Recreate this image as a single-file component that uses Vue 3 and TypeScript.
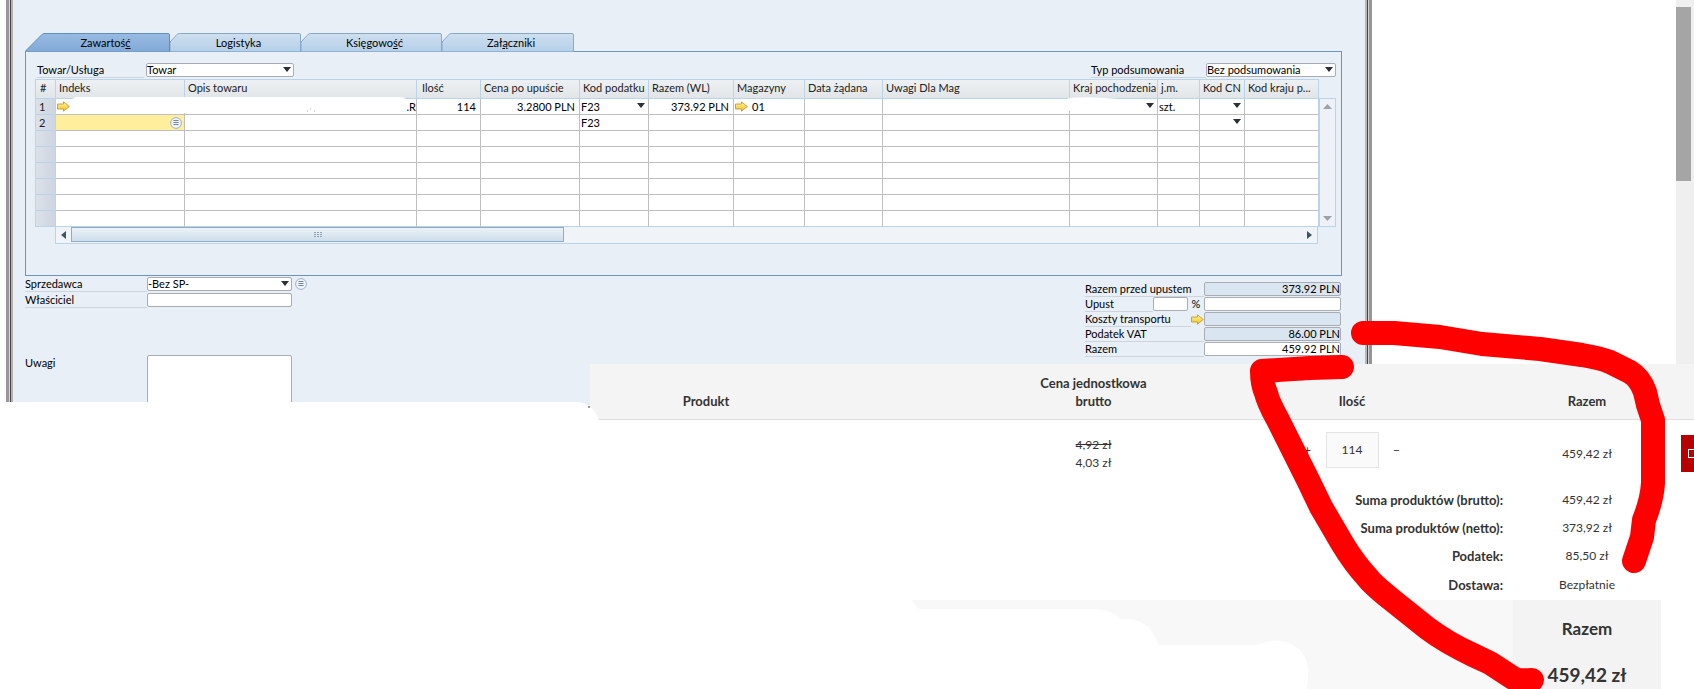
<script setup lang="ts">
import { ref } from 'vue'

interface Tab { before: string; key: string; after: string; width: number }
interface Column { label: string; width?: number; pad?: number }
interface Line {
  item?: 'link' | 'active'
  description?: string
  quantity?: string
  price?: string
  tax?: string
  taxMenu?: boolean
  total?: string
  store?: string
  countryMenu?: boolean
  unit?: string
  cnMenu?: boolean
}

const tabs: Tab[] = [
  { before: 'Zawartoś', key: 'ć', after: '', width: 145 },
  { before: 'Lo', key: 'g', after: 'istyka', width: 131 },
  { before: 'Księgowo', key: 'ś', after: 'ć', width: 141 },
  { before: 'Zał', key: 'ą', after: 'czniki', width: 132 },
]
const activeTab = ref(0)

const tabShape = (i: number, w: number): string =>
  i === 0
    ? `M0 18.500L17 1.500Q18 .5 20 .5H${w - 2}Q${w - 0.5} .5 ${w - 0.5} 2V18.500`
    : `M0 18.500V9L7 1.500Q8 .5 10 .5H${w - 2}Q${w - 0.5} .5 ${w - 0.5} 2V18.500`

const columns: Column[] = [
  { label: '#', width: 20 },
  { label: 'Indeks', width: 129 },
  { label: 'Opis towaru', width: 232 },
  { label: 'Ilość', width: 64, pad: 1 },
  { label: 'Cena po upuście', width: 99 },
  { label: 'Kod podatku', width: 69 },
  { label: 'Razem (WL)', width: 85 },
  { label: 'Magazyny', width: 71 },
  { label: 'Data żądana', width: 78 },
  { label: 'Uwagi Dla Mag' },
  { label: 'Kraj pochodzenia', width: 88 },
  { label: 'j.m.', width: 42 },
  { label: 'Kod CN', width: 45 },
  { label: 'Kod kraju p...', width: 74 },
]

const lines: Line[] = [
  {
    item: 'link', description: '.R', quantity: '114', price: '3.2800 PLN', tax: 'F23', taxMenu: true,
    total: '373.92 PLN', store: '01', countryMenu: true, unit: 'szt.', cnMenu: true,
  },
  { item: 'active', tax: 'F23', cnMenu: true },
  {}, {}, {}, {}, {}, {},
]

const sums = [
  { label: 'Suma produktów (brutto):', value: '459,42 zł' },
  { label: 'Suma produktów (netto):', value: '373,92 zł' },
  { label: 'Podatek:', value: '85,50 zł' },
  { label: 'Dostawa:', value: 'Bezpłatnie' },
]
const amount = ref('114')
</script>

<template>
  <main class="page">
    <svg class="defs" aria-hidden="true">
      <defs>
        <linearGradient id="gold" x1="0" y1="0" x2="0" y2="1">
          <stop offset="0" stop-color="#fff6a8" />
          <stop offset="1" stop-color="#f3bf1c" />
        </linearGradient>
        <symbol id="arrow" viewBox="0 0 13 11">
          <path d="M.5 3H6.500V.8L12.300 5.500L6.500 10.200V8H.5Z" fill="url(#gold)" stroke="#c79a28" stroke-width=".9" />
        </symbol>
        <symbol id="list" viewBox="0 0 12 12">
          <circle cx="6" cy="6" r="5.400" fill="#eef3fa" stroke="#9fb0cf" />
          <path d="M3.500 3.500H8.500M3.500 5.500H8.500M3.500 7.500H8.500" stroke="#76849c" />
        </symbol>
        <linearGradient id="tab-on" x1="0" y1="0" x2="0" y2="1">
          <stop offset="0" stop-color="#98bbe2" />
          <stop offset="1" stop-color="#82a9d7" />
        </linearGradient>
        <linearGradient id="tab-off" x1="0" y1="0" x2="0" y2="1">
          <stop offset="0" stop-color="#cfdff0" />
          <stop offset="1" stop-color="#b5d0e8" />
        </linearGradient>
      </defs>
    </svg>

    <section class="erp">
      <div class="frame-left"></div>
      <div class="body">
        <div class="tabs" role="tablist">
          <button
            v-for="(tab, i) in tabs" :key="tab.before" type="button" role="tab" class="tab"
            :aria-selected="i === activeTab" :style="{ width: tab.width + 'px' }" @click="activeTab = i"
          >
            <svg class="tab-shape" :width="tab.width" height="19" aria-hidden="true">
              <path
                :d="tabShape(i, tab.width)" :fill="i === activeTab ? 'url(#tab-on)' : 'url(#tab-off)'"
                :stroke="i === activeTab ? '#5f8fc0' : '#86a9cb'"
              />
            </svg>
            <span class="tab-text">{{ tab.before }}<u>{{ tab.key }}</u>{{ tab.after }}</span>
          </button>
        </div>

        <div class="panel">
          <div class="toolbar">
            <label class="label kind" for="kind">Towar/Usługa</label>
            <span class="pick kind-pick"><select id="kind"><option>Towar</option></select></span>
            <span class="grow"></span>
            <label class="label summary" for="summary">Typ podsumowania</label>
            <span class="pick summary-pick"><select id="summary"><option>Bez podsumowania</option></select></span>
          </div>

          <div class="grid-row">
            <table class="lines">
              <colgroup>
                <col v-for="c in columns" :key="c.label" :style="c.width ? { width: c.width + 'px' } : {}">
              </colgroup>
              <thead>
                <tr><th v-for="c in columns" :key="c.label" :class="{ inset: c.pad }">{{ c.label }}</th></tr>
              </thead>
              <tbody>
                <tr v-for="(line, i) in lines" :key="i">
                  <th scope="row">{{ i < 2 ? i + 1 : '' }}</th>
                  <td :class="{ active: line.item === 'active' }">
                    <svg v-if="line.item === 'link'" class="arrow"><use href="#arrow" /></svg>
                    <svg v-if="line.item === 'active'" class="list end"><use href="#list" /></svg>
                  </td>
                  <td class="num tight">{{ line.description }}</td>
                  <td class="num">{{ line.quantity }}</td>
                  <td class="num">{{ line.price }}</td>
                  <td>
                    <span v-if="line.taxMenu" class="pick flat"><select aria-label="Kod podatku"><option>{{ line.tax }}</option></select></span>
                    <template v-else>{{ line.tax }}</template>
                  </td>
                  <td class="num">{{ line.total }}</td>
                  <td><span v-if="line.store" class="store"><svg class="arrow"><use href="#arrow" /></svg>{{ line.store }}</span></td>
                  <td></td>
                  <td></td>
                  <td><span v-if="line.countryMenu" class="pick flat"><select aria-label="Kraj pochodzenia"><option></option></select></span></td>
                  <td>{{ line.unit }}</td>
                  <td><span v-if="line.cnMenu" class="pick flat"><select aria-label="Kod CN"><option></option></select></span></td>
                  <td></td>
                </tr>
              </tbody>
            </table>
            <div class="vscroll">
              <button type="button" aria-label="W górę"><svg width="9" height="5"><path d="M4.500 0L9 5H0Z" fill="#9aa3ab" /></svg></button>
              <button type="button" aria-label="W dół"><svg width="9" height="5"><path d="M0 0H9L4.500 5Z" fill="#9aa3ab" /></svg></button>
            </div>
          </div>
          <div class="hscroll">
            <button type="button" aria-label="W lewo"><svg width="5" height="8"><path d="M5 0V8L0 4Z" fill="#3f5563" /></svg></button>
            <div class="hthumb"><svg width="8" height="5"><path d="M0 .5H8M0 2.500H8M0 4.500H8" stroke="#8fa1b3" stroke-dasharray="2 1" /></svg></div>
            <span class="grow"></span>
            <button type="button" aria-label="W prawo"><svg width="5" height="8"><path d="M0 0V8L5 4Z" fill="#3f5563" /></svg></button>
          </div>
        </div>

        <div class="footer">
          <div class="people">
            <label class="label" for="seller">Sprzedawca</label>
            <span class="pick"><select id="seller"><option>-Bez SP-</option></select></span>
            <svg class="list"><use href="#list" /></svg>
            <label class="label" for="owner">Właściciel</label>
            <input id="owner" class="field" type="text">
            <label class="notes-label" for="notes">Uwagi</label>
            <textarea id="notes" class="notes"></textarea>
          </div>
          <div class="totals">
            <label class="label" for="t1">Razem przed upustem</label>
            <input id="t1" class="field shaded" type="text" value="373.92 PLN" readonly>
            <div class="discount">
              <label class="label grow" for="t2">Upust</label>
              <input id="t2" class="field percent" type="text"><span>%</span>
            </div>
            <input class="field" type="text" aria-label="Kwota upustu">
            <div class="discount">
              <label class="label grow" for="t3">Koszty transportu</label>
              <svg class="arrow"><use href="#arrow" /></svg>
            </div>
            <input id="t3" class="field shaded" type="text" readonly>
            <label class="label" for="t4">Podatek VAT</label>
            <input id="t4" class="field shaded" type="text" value="86.00 PLN" readonly>
            <label class="label" for="t5">Razem</label>
            <input id="t5" class="field" type="text" value="459.92 PLN">
          </div>
        </div>
      </div>
      <div class="frame-right"></div>
    </section>

    <div class="track"><div class="thumb"></div></div>

    <svg class="wipe" viewBox="0 0 1694 689" preserveAspectRatio="none" aria-hidden="true">
      <path
        fill="#fff"
        d="M76 97H400Q407 97 407 103V113H71V102Q72 98 76 97ZM1068 98Q1092 96 1118 99V111H1068ZM0 402H576Q586 402 591 408Q597 413 599 421H0Z"
      />
      <circle cx="589" cy="407" r="1" fill="#777" />
      <path d="M307 111H308M310 109H311M314 111H315" stroke="#aaa" />
    </svg>

    <section class="shop">
      <table class="cart">
        <colgroup><col><col class="c-unit"><col class="c-qty"><col class="c-sum"><col class="c-del"></colgroup>
        <thead>
          <tr>
            <th class="product">Produkt</th>
            <th>Cena jednostkowa<br>brutto</th>
            <th>Ilość</th>
            <th>Razem</th>
            <th></th>
          </tr>
        </thead>
        <tbody>
          <tr class="item">
            <td></td>
            <td class="prices"><s>4,92 zł</s><br>4,03 zł</td>
            <td>
              <div class="stepper">
                <button type="button" aria-label="Więcej">+</button>
                <input v-model="amount" type="text" aria-label="Ilość">
                <button type="button" aria-label="Mniej">−</button>
              </div>
            </td>
            <td class="line-sum">459,42 zł</td>
            <td class="del"><button type="button" class="remove" aria-label="Usuń"><svg width="12" height="9"><rect x=".5" y=".5" width="11" height="8" fill="none" stroke="#fff" /></svg></button></td>
          </tr>
          <tr v-for="s in sums" :key="s.label" class="sum">
            <th colspan="3">{{ s.label }}</th>
            <td>{{ s.value }}</td>
            <td></td>
          </tr>
          <tr class="grand">
            <td colspan="3" class="pale"></td>
            <td class="grand-cell"><strong>Razem</strong><b>459,42 zł</b></td>
            <td></td>
          </tr>
        </tbody>
      </table>
    </section>

    <svg class="marks" viewBox="0 0 1694 689" preserveAspectRatio="none" aria-hidden="true">
      <path
        fill="#fff"
        d="M589 599H911L918 609H1095Q1110 609 1120 619Q1150 617 1158 645H1258Q1270 639 1283 641Q1308 648 1308 672Q1309 682 1306 690H589Z"
      />
      <g fill="none" stroke="#fe0000" stroke-width="24" stroke-linecap="round" stroke-linejoin="round">
        <path d="M1363 333L1394 333L1440 337L1482 344L1540 349L1582 355Q1600 358 1610 362L1630 372Q1640 378 1645 392L1648 405L1653 420V483Q1652 500 1644 520L1642 537L1634 561" />
        <path d="M1342 367L1310 368L1262 371Q1262 384 1266 393Q1268 402 1278 420L1291 446L1308 480L1321 507L1342 543Q1354 563 1367 577Q1372 584 1392 600L1427 628Q1447 643 1473 655L1490 663L1513 678Q1518 681 1532 680" />
      </g>
    </svg>
  </main>
</template>

<style>
body { margin: 0; background: #fff; }
</style>

<style scoped>
.page {
  position: relative;
  display: grid;
  grid-template-columns: 6px minmax(0, 1366fr) minmax(0, 304fr) 18px;
  grid-template-rows: 364px 44px auto;
  min-height: 100vh;
  overflow: hidden;
  background: #fff;
}
.page * { box-sizing: border-box; }
.defs { position: absolute; width: 0; height: 0; }

.erp {
  grid-column: 2;
  grid-row: 1 / 3;
  display: grid;
  grid-template-columns: 7px minmax(0, 1fr) 7px;
  background: #e9eff6;
  color: #000;
  font: 11px/14px Lato, "Noto Sans", sans-serif;
  overflow: hidden;
}
.frame-left { background: linear-gradient(90deg, #96969c 0 3px, #d8d8d8 3px 4px, #4a4646 4px 5px, #b8b0ac 5px 7px); }
.frame-right { background: linear-gradient(90deg, #b6b8b8 0 2px, #454545 2px 3px, #d2d2d2 3px 4px, #969696 4px 7px); }
.body { padding: 33px 23px 0 12px; min-width: 0; }

.tabs { display: flex; height: 18px; }
.tab { position: relative; flex: none; height: 19px; padding: 0; border: 0; background: none; font: inherit; color: #000; }
.tab-shape { position: absolute; left: 0; top: 0; }
.tab-text { position: relative; padding-left: 6px; line-height: 20px; }
.tab:first-child .tab-text { padding-left: 16px; }

.panel { height: 225px; padding: 11px 5px 0 9px; border: 1px solid #6a94c2; }
.toolbar { display: flex; height: 16px; padding-left: 2px; }
.grow { flex: 1; }
.label { height: 15px; border-bottom: 1px solid #cdd4dc; white-space: nowrap; }
.kind { width: 107px; margin-right: 2px; }
.summary { width: 115px; }
.kind-pick { width: 148px; }
.summary-pick { width: 130px; }

.pick { position: relative; display: block; height: 14px; background: #fff; border: 1px solid #a9adb3; border-radius: 2px; }
.pick::after { content: ""; position: absolute; right: 2px; top: 3px; border: 4px solid transparent; border-top: 5px solid #2b2f36; border-bottom: 0; }
.pick select { display: block; width: 100%; height: 12px; padding: 0; border: 0; outline: 0; background: none; appearance: none; font: inherit; line-height: 12px; color: #000; }
.pick.flat { border: 0; height: 15px; background: none; }
.pick.flat select { height: 15px; line-height: 15px; }
.pick.flat::after { right: 1px; top: 4px; }

.grid-row { display: flex; }
.lines { flex: 1 1 0; width: 100%; min-width: 0; table-layout: fixed; border-collapse: separate; border-spacing: 0; border-top: 1px solid #b9d3ea; border-left: 1px solid #b9d3ea; }
.lines th { height: 19px; padding: 0 0 2px 3px; text-align: left; font-weight: 400; color: #222; line-height: 14px; white-space: nowrap; overflow: hidden; border-right: 1px solid #b9d3ea; border-bottom: 1px solid #b9d3ea; background: linear-gradient(#eef1f4, #e1e5e8); }
.lines th.inset { padding-left: 5px; }
.lines thead th:first-child { padding-left: 4px; }
.lines tbody th { height: 16px; padding: 0 0 0 3px; background: linear-gradient(90deg, #dde1e9, #cdd5e0); line-height: 15px; }
.lines td { height: 16px; padding: 0 2px 0 1px; line-height: 15px; background: #fff; border-right: 1px solid #bfbfbf; border-bottom: 1px solid #bfbfbf; white-space: nowrap; overflow: hidden; }
.lines tr:last-child td { border-bottom-color: #b9d3ea; }
.lines td:last-child { border-right-color: #b9d3ea; }
.lines td.active { background: #ffef9c; }
.lines .num { text-align: right; padding-right: 4px; }
.lines .tight { padding-right: 0; }
.arrow { display: block; flex: none; width: 13px; height: 11px; }
.list { display: block; width: 12px; height: 12px; }
.list.end { margin-left: auto; }
.store { display: flex; align-items: center; gap: 4px; }

.vscroll { display: flex; flex: none; flex-direction: column; justify-content: space-between; width: 17px; margin-top: 19px; border: 1px solid #b9d3ea; background: #eef2f8; }
.vscroll button, .hscroll button { display: flex; flex: none; align-items: center; justify-content: center; width: 15px; height: 15px; padding: 0; border: 0; background: none; }
.hscroll { display: flex; height: 17px; margin: 0 18px 0 20px; border: 1px solid #b9d3ea; border-top: 0; background: #f0f4f9; }
.hthumb { display: flex; align-items: center; justify-content: center; width: 493px; height: 15px; border: 1px solid #8eacc8; background: linear-gradient(#ecf2f8, #cedeea); }

.footer { display: flex; justify-content: space-between; }
.people { display: grid; grid-template-columns: 122px 145px 15px; grid-template-rows: 16px 62px 60px; align-content: start; padding-top: 1px; }
.people > .list { margin: 1px 0 0 3px; }
.notes-label { grid-column: 1; grid-row: 3; padding-top: 1px; }
.field { display: block; width: 100%; height: 14px; min-width: 0; margin: 0; padding: 0; border: 1px solid #a9adb3; border-radius: 2px; background: #fff; font: inherit; color: #000; text-align: right; outline: 0; }
.notes { grid-column: 2; grid-row: 3; width: 145px; height: 60px; margin: 0; border: 1px solid #a9adb3; border-radius: 2px; background: #fff; resize: none; outline: 0; }
.totals { display: grid; grid-template-columns: 119px 137px; grid-auto-rows: 15px; align-content: start; padding-top: 6px; margin-right: 1px; }
.shaded { background: #d9e5f1; }
.discount { display: flex; }
.discount .percent { flex: none; width: 35px; }
.discount span { width: 16px; text-align: center; }
.discount .arrow { margin: 2px 0 0; }

.track { grid-column: 4; grid-row: 1; padding-top: 7px; background: #efefef; }
.thumb { width: 15px; height: 174px; background: #a5a5a5; }

.wipe, .marks { position: absolute; inset: 0; width: 100%; height: 100%; pointer-events: none; }
.wipe { z-index: 1; }
.marks { z-index: 2; }

.shop { grid-column: 1 / -1; grid-row: 2 / 4; margin-left: 590px; background: #fff; overflow: hidden; z-index: 0; }
.cart { width: 100%; table-layout: fixed; border-collapse: collapse; color: #333; font: 13px/18px Lato, "Open Sans", sans-serif; }
.cart th, .cart td { padding: 0; text-align: center; }
.cart td { font-size: 12px; }
.c-unit { width: 195px; }
.c-qty { width: 322px; }
.c-sum { width: 148px; }
.c-del { width: 33px; }
.cart th { font-weight: 700; }
.cart thead th { height: 55px; padding-bottom: 9px; vertical-align: bottom; background: #f4f4f4; border-bottom: 1px solid #ddd; }
.cart thead .product { padding-right: 174px; }
.item td { height: 67px; vertical-align: top; }
.cart .prices { padding-top: 16px; }
.cart .line-sum { padding-top: 25px; }
.cart .del { padding-top: 15px; }
.stepper { display: flex; justify-content: center; align-items: center; padding-top: 12px; }
.stepper input { width: 53px; height: 36px; padding: 0; border: 1px solid #e5e5e5; background: #fafafa; color: #333; font: inherit; text-align: center; outline: 0; }
.stepper button { width: 36px; padding: 0; border: 0; background: none; color: #333; font: inherit; }
.remove { display: flex; align-items: center; width: 38px; height: 37px; margin-left: 20px; padding: 0 0 0 7px; border: 0; background: #b80000; }
.sum th, .sum td { height: 28px; }
.sum:nth-last-child(2) th, .sum:nth-last-child(2) td { height: 30px; }
.cart .sum th { padding-right: 10px; text-align: right; }
.grand td { height: 89px; vertical-align: top; }
.grand .pale { background: #f8f8f8; }
.cart .grand-cell { background: #f3f3f3; padding-top: 17px; }
.grand strong, .grand b { display: block; font-weight: 700; font-size: 17px; line-height: 24px; }
.grand b { margin-top: 22px; font-size: 19px; }
</style>
